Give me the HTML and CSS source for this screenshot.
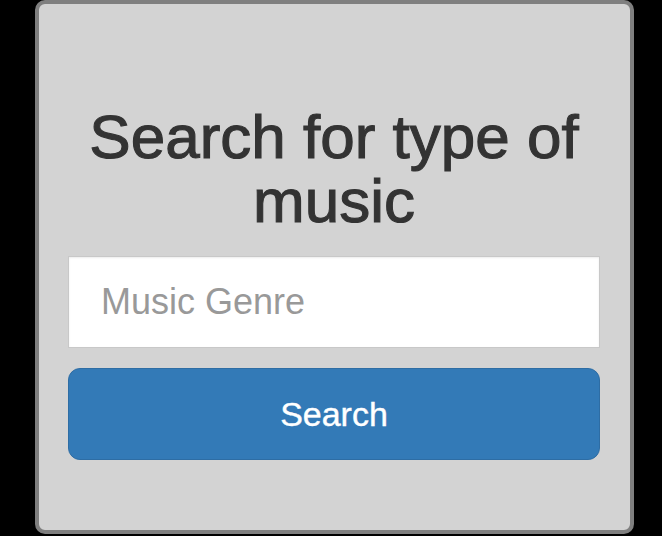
FILE: index.html
```html
<!DOCTYPE html>
<html lang="en">
<head>
<meta charset="utf-8">
<title>Search for type of music</title>
<link rel="stylesheet" href="styles.css">
</head>
<body>
<div class="card">
  <h1 class="title">Search for type of music</h1>
  <form class="search-form">
    <input class="genre-input" type="text" placeholder="Music Genre">
    <button class="search-btn" type="button">Search</button>
  </form>
</div>
</body>
</html>
```

FILE: styles.css
```css
html, body {
  margin: 0;
  padding: 0;
  background: #000;
}

body {
  font-family: "Liberation Sans", Arial, Helvetica, sans-serif;
  width: 662px;
  height: 536px;
  overflow: hidden;
}

.card {
  box-sizing: border-box;
  margin-left: 35px;
  width: 599px;
  height: 534px;
  background: #d3d3d3;
  border: 4px solid #7f7f7f;
  border-radius: 10px;
  padding: 101px 30px 0 29px;
  display: flex;
  flex-direction: column;
}

.title {
  margin: 0;
  font-size: 62px;
  line-height: 64px;
  font-weight: 400;
  color: #333;
  text-align: center;
  -webkit-text-stroke: 1.1px #333;
}

.search-form {
  margin-top: 23px;
  display: flex;
  flex-direction: column;
  gap: 20px;
}

.genre-input {
  box-sizing: border-box;
  width: 100%;
  height: 92px;
  margin: 0;
  padding: 0 32px;
  border: 1px solid #c8c8c8;
  border-radius: 0;
  background: #fff;
  box-shadow: inset 0 1px 2px rgba(0, 0, 0, 0.08);
  font-family: "Liberation Sans", Arial, Helvetica, sans-serif;
  font-size: 36px;
  color: #555;
  outline: none;
}

.genre-input::placeholder {
  color: #999;
}

.search-btn {
  box-sizing: border-box;
  width: 100%;
  height: 92px;
  margin: 0;
  padding: 0;
  border: 1px solid #2e6da4;
  border-radius: 12px;
  background: #337ab7;
  color: #fff;
  font-family: "Liberation Sans", Arial, Helvetica, sans-serif;
  font-size: 34px;
  -webkit-text-stroke: 0.4px #fff;
  cursor: pointer;
}
```
